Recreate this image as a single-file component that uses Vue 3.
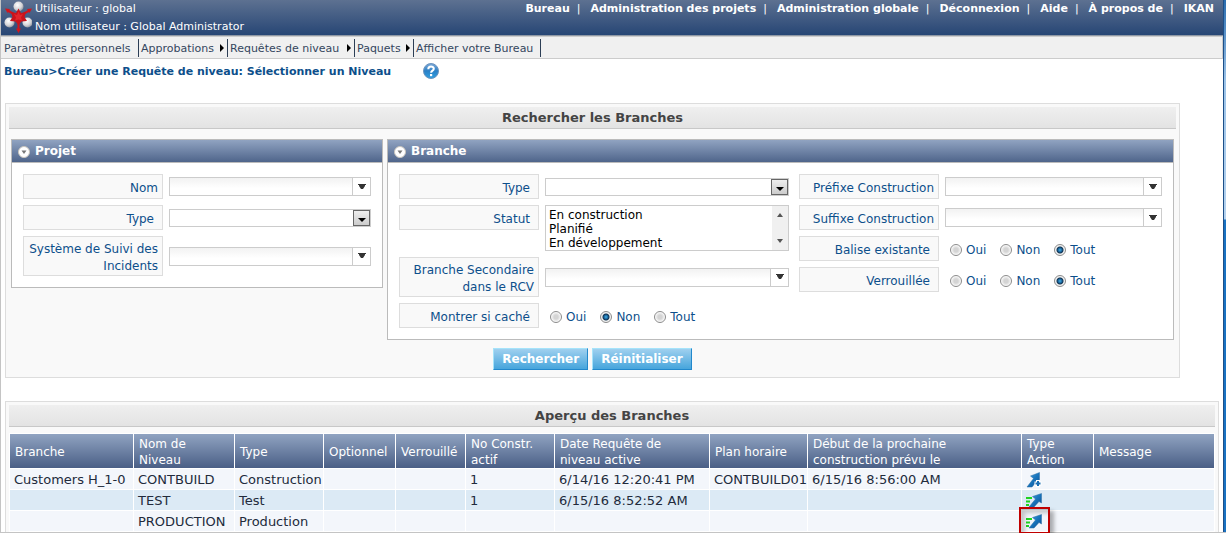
<script setup>
import { ref } from 'vue'

const topLinks = ['Bureau', 'Administration des projets', 'Administration globale', 'Déconnexion', 'Aide', 'À propos de', 'IKAN']

const menu = [
  { text: 'Paramètres personnels', sub: false, size: 'wide' },
  { text: 'Approbations', sub: true, size: 'medium' },
  { text: 'Requêtes de niveau', sub: true, size: 'broad' },
  { text: 'Paquets', sub: true, size: 'small' },
  { text: 'Afficher votre Bureau', sub: false, size: 'broad' }
]

const projectFields = [
  { id: 'p-nom', label: 'Nom', kind: 'combo' },
  { id: 'p-type', label: 'Type', kind: 'select' },
  { id: 'p-suivi', label: 'Système de Suivi des Incidents', kind: 'combo', tall: true }
]
const branchColumns = [
  [
    { id: 'b-type', label: 'Type', kind: 'select' },
    { id: 'b-statut', label: 'Statut', kind: 'list' },
    { id: 'b-rcv', label: 'Branche Secondaire dans le RCV', kind: 'combo', tall: true },
    { id: 'b-cache', label: 'Montrer si caché', kind: 'radio' }
  ],
  [
    { id: 'b-prefixe', label: 'Préfixe Construction', kind: 'combo' },
    { id: 'b-suffixe', label: 'Suffixe Construction', kind: 'combo' },
    { id: 'b-balise', label: 'Balise existante', kind: 'radio' },
    { id: 'b-verrou', label: 'Verrouillée', kind: 'radio' }
  ]
]
const panels = [
  { title: 'Projet', columns: [projectFields] },
  { title: 'Branche', columns: branchColumns }
]
const states = ['En construction', 'Planifié', 'En développement']
const choices = ['Oui', 'Non', 'Tout']
const picked = ref({ 'b-cache': 'Non', 'b-balise': 'Tout', 'b-verrou': 'Tout' })

const heads = ['Branche', 'Nom de Niveau', 'Type', 'Optionnel', 'Verrouillé', 'No Constr. actif', 'Date Requête de niveau active', 'Plan horaire', 'Début de la prochaine construction prévu le', 'Type Action', 'Message']
const rows = [
  { cells: ['Customers H_1-0', 'CONTBUILD', 'Construction', '', '', '1', '6/14/16 12:20:41 PM', 'CONTBUILD01', '6/15/16 8:56:00 AM'], action: 'build' },
  { cells: ['', 'TEST', 'Test', '', '', '1', '6/15/16 8:52:52 AM', '', ''], action: 'deliver' },
  { cells: ['', 'PRODUCTION', 'Production', '', '', '', '', '', ''], action: 'deliver', marked: true }
]
</script>

<template>
  <div class="shell">
    <div class="page">
      <header class="banner">
        <svg class="logo" width="30" height="34" viewBox="0 0 30 34" aria-hidden="true">
          <defs>
            <radialGradient id="ball" cx="40%" cy="35%" r="70%">
              <stop offset="0" stop-color="#fff" />
              <stop offset=".6" stop-color="#d5d5d8" />
              <stop offset="1" stop-color="#8c8f98" />
            </radialGradient>
          </defs>
          <circle cx="16.500" cy="6.500" r="5" fill="url(#ball)" />
          <circle cx="7.500" cy="22.500" r="5" fill="url(#ball)" />
          <circle cx="25.500" cy="22.500" r="5" fill="url(#ball)" />
          <path d="M16.500 16.500L5.500 10.500M16.500 16.500L27.500 10.500M16.500 16.500V31" stroke="#d3141c" stroke-width="2" />
          <path d="M3 8.500l5 .5-2.500 4zM30 8.500l-5 .5 2.500 4zM14 28.500h5l-2.500 4.500z" fill="#d3141c" />
          <path d="M16.500 8.500l2.500 4.500 5-1-1.500 5 2.500 4-5.500.5-3 3.500-3-3.500-5.500-.5 2.500-4-1.500-5 5 1z" fill="#c9131b" />
          <path d="M16.500 11.500l1.500 3.500 3-1-2 3.500 1 3-3.500-1-3.500 1 1-3-2-3.500 3 1z" fill="#e0262c" />
        </svg>
        <div class="who">
          <div>Utilisateur : global</div>
          <div>Nom utilisateur : Global Administrator</div>
        </div>
        <nav class="links">
          <a v-for="l in topLinks" :key="l" href="#">{{ l }}</a>
        </nav>
      </header>

      <nav class="menu">
        <a v-for="m in menu" :key="m.text" href="#" :class="m.size">
          <span>{{ m.text }}</span>
          <svg v-if="m.sub" width="4" height="8" viewBox="0 0 4 8"><path d="M0 0l4 4-4 4z" fill="#000" /></svg>
        </a>
      </nav>

      <div class="crumb">
        <h1>Bureau&gt;Créer une Requête de niveau: Sélectionner un Niveau</h1>
        <a href="#" aria-label="Aide">
          <svg width="16" height="16" viewBox="0 0 16 16">
            <defs>
              <linearGradient id="help" x2="0" y2="1">
                <stop offset="0" stop-color="#7da9d8" />
                <stop offset=".5" stop-color="#2a80c6" />
                <stop offset="1" stop-color="#2f9fe0" />
              </linearGradient>
            </defs>
            <circle cx="8" cy="8" r="7.500" fill="url(#help)" stroke="#6c93bd" />
            <path d="M5.300 6.200C5.300 2.600 10.800 2.800 10.800 5.800C10.800 7.700 8.100 7.600 8.100 9.700" fill="none" stroke="#fff" stroke-width="2" />
            <rect x="7" y="11" width="2.200" height="2.200" fill="#fff" />
          </svg>
        </a>
      </div>

      <form class="box search" @submit.prevent>
        <h2>Rechercher les Branches</h2>
        <div class="panels">
          <section v-for="p in panels" :key="p.title" class="panel">
            <h3>
              <svg width="12" height="12" viewBox="0 0 12 12">
                <circle cx="6" cy="6" r="5.500" fill="#fff" stroke="#c9c5bd" />
                <path d="M3.500 4.500h5L6 8z" fill="#777" />
              </svg>
              {{ p.title }}
            </h3>
            <div class="fields" :class="{ pair: p.columns.length > 1 }">
              <div v-for="(col, i) in p.columns" :key="i" class="column">
                <div v-for="f in col" :key="f.id" class="field">
                  <label v-if="f.kind !== 'radio'" class="caption" :class="{ tall: f.tall, inset: f.kind !== 'combo' }" :for="f.id">{{ f.label }}</label>
                  <span v-else :id="f.id" class="caption inset">{{ f.label }}</span>

                  <div v-if="f.kind === 'combo'" class="combo">
                    <input :id="f.id" type="text" />
                    <button type="button" :aria-label="f.label">
                      <svg width="8" height="6" viewBox="0 0 8 6"><path d="M0 0h8v1H7v1L5 5H3L1 2V1H0z" fill="#333" /></svg>
                    </button>
                  </div>
                  <div v-else-if="f.kind === 'select'" class="drop">
                    <select :id="f.id"><option></option></select>
                    <span class="knob"><svg width="8" height="4" viewBox="0 0 8 4"><path d="M0 0h8L4 4z" fill="#000" /></svg></span>
                  </div>
                  <div v-else-if="f.kind === 'list'" class="list">
                    <select :id="f.id" multiple size="3">
                      <option v-for="s in states" :key="s">{{ s }}</option>
                    </select>
                    <span class="bar">
                      <svg width="6" height="4" viewBox="0 0 6 4"><path d="M0 4h6L3 0z" fill="#555" /></svg>
                      <svg width="6" height="4" viewBox="0 0 6 4"><path d="M0 0h6L3 4z" fill="#555" /></svg>
                    </span>
                  </div>
                  <div v-else class="radios" role="radiogroup" :aria-labelledby="f.id">
                    <label v-for="c in choices" :key="c"><input v-model="picked[f.id]" type="radio" :name="f.id" :value="c" />{{ c }}</label>
                  </div>
                </div>
              </div>
            </div>
          </section>
        </div>
        <div class="actions">
          <button type="submit">Rechercher</button>
          <button type="reset">Réinitialiser</button>
        </div>
      </form>

      <section class="box overview">
        <h2>Aperçu des Branches</h2>
        <table>
          <colgroup>
            <col v-for="(h, i) in heads" :key="h" :class="'c' + i" />
          </colgroup>
          <thead>
            <tr><th v-for="h in heads" :key="h" scope="col">{{ h }}</th></tr>
          </thead>
          <tbody>
            <tr v-for="(r, n) in rows" :key="n">
              <td v-for="(c, i) in r.cells" :key="i">{{ c }}</td>
              <td>
                <a href="#" class="action" :aria-label="r.cells[1]">
                  <svg width="18" height="18" viewBox="0 0 18 18">
                    <defs>
                      <linearGradient :id="'arrow' + n" x2="1" y2="1">
                        <stop offset="0" stop-color="#4ba6df" />
                        <stop offset=".5" stop-color="#1875bd" />
                        <stop offset="1" stop-color="#0d4f90" />
                      </linearGradient>
                    </defs>
                    <template v-if="r.action === 'build'">
                      <path d="M13.500 1.500V11L11 10 6 16H1L7.500 7.500 4.500 5z" :fill="'url(#arrow' + n + ')'" stroke="#2d6da3" stroke-width=".5" />
                      <path d="M12 9v7M8.500 12.500h7" stroke="#fff" stroke-width="4" />
                      <path d="M12 10v5M9.500 12.500h5" stroke="#1b6fb4" stroke-width="2" />
                    </template>
                    <template v-else>
                      <path d="M0 6h6M0 9.500h4M0 13h3" stroke="#1fd321" stroke-width="2" />
                      <path d="M15.500 1.500V11L13 9.500 8 15H3L9.500 7 6.500 4.500z" :fill="'url(#arrow' + n + ')'" stroke="#2d6da3" stroke-width=".5" />
                    </template>
                  </svg>
                  <span v-if="r.marked" class="marker"></span>
                </a>
              </td>
              <td></td>
            </tr>
          </tbody>
        </table>
      </section>
    </div>
    <div class="edge"></div>
  </div>
</template>

<style>
body { margin: 0; background: #fff; }
</style>

<style scoped>
* { box-sizing: border-box; }
.shell {
  display: flex;
  font: 12px/17px Verdana, "DejaVu Sans", sans-serif;
  color: #222b3c;
  border-bottom: 1px solid #c4c4c4;
}
.page { flex: 1; min-width: 0; border-left: 1px solid #c4c4c4; }
.edge {
  width: 3px;
  border-left: 1px solid #1d4f88;
  background: linear-gradient(#2a6db0 0, #9cc3e8 80px, #b5d2ee 219px, #1a72c2 220px);
}
a { color: inherit; text-decoration: none; }

.banner {
  display: flex;
  align-items: flex-start;
  height: 36px;
  background: linear-gradient(#5d7191, #274675);
  border-bottom: 1px solid #8f98a5;
  color: #fff;
  font-size: 11px;
  line-height: 18px;
}
.logo { margin-left: 1px; }
.who { margin-left: 3px; white-space: nowrap; }
.links { margin-left: auto; padding-right: 9px; font-weight: bold; white-space: nowrap; }
.links a:not(:last-child)::after { content: "|"; font-weight: normal; padding: 0 10px 0 7px; }

.menu {
  display: flex;
  height: 23px;
  padding: 2px 0 1px 3px;
  background: #f0f0f0;
  border: 1px solid #ccc;
  border-left: 0;
  color: #34465e;
  font-size: 11px;
  line-height: 19px;
}
.menu a {
  display: flex;
  align-items: center;
  justify-content: space-between;
  padding-right: 3px;
  margin-right: 2px;
  border-right: 1px solid #2c3e55;
  white-space: nowrap;
}
.menu .wide { min-width: 135px; }
.menu .broad { min-width: 125px; }
.menu .medium { min-width: 87px; }
.menu .small { min-width: 57px; }

.crumb { display: flex; align-items: center; gap: 32px; height: 24px; padding-left: 3px; color: #0d4f8b; }
.crumb h1 { margin: 0; font-size: 11px; }
.crumb a { display: flex; }

.box { background: #f9f9f9; border: 1px solid #ddd; padding: 3px; }
.box h2 {
  margin: 0;
  height: 22px;
  background: linear-gradient(#efefef, #e3e3e3);
  border-bottom: 1px solid #c8c8c8;
  color: #444;
  font-size: 13px;
  line-height: 21px;
  text-align: center;
}
.search { margin: 20px 43px 0 4px; }
.panels { display: grid; grid-template-columns: 372fr 787fr; align-items: start; gap: 4px; margin: 10px 2px 8px; }
.panel { background: #fff; border: 1px solid #bbb; }
.panel h3 {
  display: flex;
  align-items: center;
  gap: 5px;
  margin: 0;
  height: 23px;
  padding: 1px 0 0 6px;
  background: linear-gradient(#90a3c1, #4f658b);
  border-bottom: 1px solid #bbb;
  color: #fff;
  font-size: 12px;
}
.fields { padding: 11px; }
.pair { display: grid; grid-template-columns: 390fr 363fr; gap: 10px; }
.column { display: flex; flex-direction: column; gap: 6px; }
.field { display: grid; grid-template-columns: 140px 1fr; gap: 6px; align-items: center; }
.caption {
  align-self: start;
  min-height: 25px;
  padding: 5px 4px 1px 0;
  background: #f9f9f9;
  border: 1px solid #ddd;
  color: #0d4f8b;
  text-align: right;
}
.caption.inset { padding-right: 8px; }
.caption.tall { padding: 4px 4px 0 0; }

.combo, .drop, .list { border: 1px solid #ccc; background: #fff; }
.combo { display: flex; height: 19px; }
.combo input {
  flex: 1;
  min-width: 0;
  padding: 0 3px;
  border: 0;
  background: linear-gradient(#f2f2f2, #fff 60%);
  font: inherit;
}
.combo button {
  display: grid;
  place-items: center;
  width: 18px;
  padding: 0;
  background: #fff;
  border: 0;
  border-left: 1px solid #ccc;
}
.drop { display: grid; height: 18px; }
.drop select { grid-area: 1 / 1; width: 100%; height: 16px; border: 0; background: #fff; appearance: none; font: inherit; }
.knob {
  grid-area: 1 / 1;
  justify-self: end;
  display: grid;
  place-items: center;
  width: 17px;
  height: 16px;
  padding-top: 4px;
  background: linear-gradient(#eee, #ccc);
  border: 1px solid #666;
  pointer-events: none;
}
.list { display: flex; height: 46px; }
.list select {
  flex: 1;
  min-width: 0;
  height: 44px;
  padding: 2px 0 0 3px;
  border: 0;
  overflow: hidden;
  color: #000;
  font: 12px/14px Verdana, "DejaVu Sans", sans-serif;
}
.list option { height: 14px; min-height: 14px; padding: 0; line-height: 14px; }
.bar {
  display: flex;
  flex-direction: column;
  justify-content: space-between;
  align-items: center;
  width: 16px;
  padding: 7px 0;
  background: #f0f0f0;
}
.radios { display: flex; gap: 14px; padding: 4px 0 0 5px; color: #0d4f8b; }
.radios label { display: flex; align-items: center; gap: 4px; }
.radios input {
  width: 12px;
  height: 12px;
  margin: 0 0 2px;
  appearance: none;
  border: 1px solid #8b8b8b;
  border-radius: 50%;
  background: radial-gradient(circle, #d4d4d4 2px, #eee 4px, #fff 5px);
}
.radios input:checked { background: radial-gradient(circle at 50% 50%, #45b4e6 0, #17609a 2px, #12334f 3px, #f2f2f2 4px); }

.actions { display: flex; justify-content: center; gap: 4px; padding-bottom: 4px; }
.actions button {
  height: 22px;
  padding: 0 8px;
  border: 1px solid;
  border-color: #a5e3fa #2288cc #2288cc #a5e3fa;
  background: linear-gradient(#9fd0ef, #46a5dc);
  color: #fff;
  font: bold 12px/20px Verdana, "DejaVu Sans", sans-serif;
}

.overview { margin: 23px 4px 0; border-bottom: 0; padding-bottom: 0; }
table { width: 100%; margin-top: 6px; table-layout: fixed; border-spacing: 1px; background: #fff; }
.c0 { width: 123px; }
.c1 { width: 100px; }
.c2, .c5 { width: 88px; }
.c3, .c9 { width: 71px; }
.c4 { width: 69px; }
.c6 { width: 154px; }
.c7 { width: 97px; }
.c8 { width: 213px; }
th {
  height: 34px;
  padding: 1px 0 0 5px;
  background: linear-gradient(#90a3c1, #4a5f86);
  color: #fff;
  font-weight: normal;
  line-height: 16px;
  text-align: left;
}
th:nth-child(7), th:nth-child(9) { padding-right: 40px; }
th:nth-child(2) { padding-right: 40px; }
td { height: 20px; padding: 2px 0 0 4px; background: #f3f6fb; font-size: 13px; line-height: 18px; white-space: nowrap; }
tbody tr:nth-child(even) td { background: #dceaf5; }
.action { position: relative; display: flex; height: 18px; align-items: center; }
.marker {
  position: absolute;
  top: -6px;
  left: -7px;
  width: 31px;
  height: 27px;
  border: 2px solid #c00000;
  box-shadow: 4px 4px 4px rgba(0, 0, 0, .3), inset 4px 4px 4px rgba(0, 0, 0, .2);
}
</style>
